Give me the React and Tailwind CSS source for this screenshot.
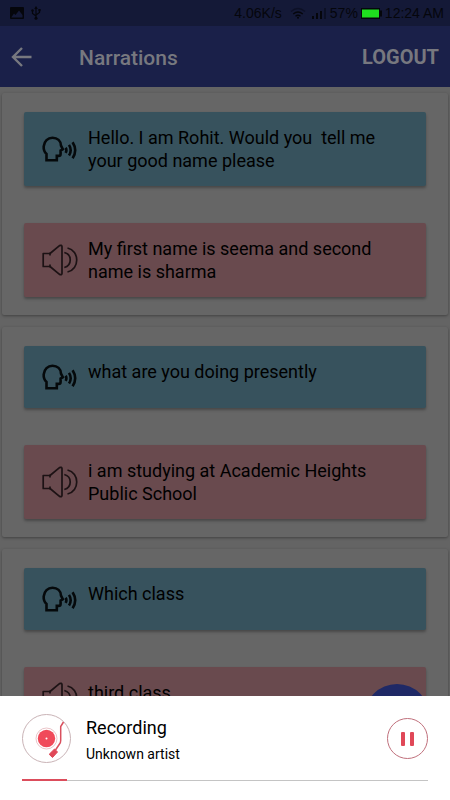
import clsx from 'clsx';

const CONVERSATIONS = [
  {
    id: 1,
    question: 'Hello. I am Rohit. Would you  tell me your good name please',
    answer: 'My first name is seema and second name is sharma',
  },
  {
    id: 2,
    question: 'what are you doing presently',
    answer: 'i am studying at Academic Heights Public School',
  },
  {
    id: 3,
    question: 'Which class',
    answer: 'third class',
  },
];

function SpeakingHeadIcon() {
  return (
    <svg viewBox="0 0 36 26" className="w-9 h-[26px]" fill="none" stroke="#05090b" strokeWidth="2.6">
      <path d="M4.500 24.300V18C2.200 15.800 1.500 13.200 1.700 10.300C2.200 5.200 5.800 1.700 10.500 1.700C15.500 1.700 18.800 5 19 9.600L20.800 13.300L18.600 14.500V18C18.600 19.400 18 19.900 16.600 19.900H14.800V24.300Z" />
      <path d="M23.600 11.700Q25.200 14.200 23.600 16.900M27 8.900Q30.400 14.200 27 19.500M30.600 6.200Q35.800 14.200 30.600 22.200" />
    </svg>
  );
}

function SpeakerIcon() {
  return (
    <svg viewBox="0 0 36 32" className="w-9 h-8" fill="none" stroke="#1c1214" strokeWidth="1.7" strokeLinejoin="round">
      <path d="M8 9.500H1.200V22.500H8M8 8.500V11.500M8 20.500V23.500" />
      <path d="M8 9.500L17.500 1.600Q19.800 0.700 20 2.500V29.500Q19.800 31.300 17.500 30.400L8 22.500" />
      <path d="M22.300 8.500C30.200 10.500 30.200 21.500 22.300 23.500M25.500 4C37.800 7 37.800 25 25.500 28" />
    </svg>
  );
}

function StatusBar() {
  return (
    <div className="flex items-center justify-between h-[26px] pl-[10px] pr-[6px] bg-[#141937] text-[#05060c]">
      <div className="flex items-center gap-[7px]">
        <svg viewBox="0 0 14 12" className="w-[14px] h-3">
          <rect width="14" height="12" rx="1" fill="#05060c" />
          <path d="M1.500 10L4 6.500L5.500 8L9 3.500L12.500 8V10.500H1.500Z" fill="#141937" />
        </svg>
        <svg viewBox="0 0 10 14" className="w-[10px] h-[14px]" fill="none" stroke="#05060c" strokeWidth="1.200">
          <path d="M5 2V12M5 10L1.500 7.500V4.500M5 9L8.500 6.500V4" />
          <path d="M5 0L6.800 3H3.200Z" fill="#05060c" stroke="none" />
          <circle cx="5" cy="12.300" r="1.500" fill="#05060c" stroke="none" />
          <circle cx="1.500" cy="4.500" r="1.200" fill="#05060c" stroke="none" />
          <rect x="7.400" y="3" width="2.200" height="2.200" fill="#05060c" stroke="none" />
        </svg>
      </div>
      <div className="flex items-center text-[14px] font-['Liberation_Sans',Arial,sans-serif]">
        <span>4.06K/s</span>
        <svg viewBox="0 0 16 12" className="w-4 h-3 ml-2" fill="none" strokeWidth="1.300">
          <path d="M1 4.500Q8 -1.500 15 4.500" stroke="#0d1026" />
          <path d="M3.200 7Q8 3 12.800 7M5.500 9.300Q8 7.200 10.500 9.300" stroke="#05060c" />
          <circle cx="8" cy="10.700" r="1" fill="#05060c" />
        </svg>
        <svg viewBox="0 0 15 12" className="w-[15px] h-3 ml-[6px]">
          <path d="M0 9h2v3H0zM4 6h2v6H4zM8 4h2v8H8z" fill="#05060c" />
          <path d="M12 1h2v11h-2z" fill="#0c1024" />
        </svg>
        <span className="ml-[3px]">57%</span>
        <svg viewBox="0 0 21 11" className="w-[21px] h-[11px] ml-[3px]">
          <path d="M0 0h19v2.500h2v6h-2V11H0z" fill="#05060c" />
          <rect x="1" y="1.500" width="17" height="8" fill="#1fe01f" />
        </svg>
        <span className="ml-[3px]">12:24 AM</span>
      </div>
    </div>
  );
}

function Header() {
  return (
    <header className="flex items-center h-[61px] shrink-0 px-[11px] bg-[#1a2049] text-[#77787f]">
      <button type="button" aria-label="Back">
        <svg viewBox="0 0 21 20" className="w-[21px] h-5" fill="none" stroke="currentColor" strokeWidth="2.400">
          <path d="M20.500 10H2.500M11 1L2 10L11 19" />
        </svg>
      </button>
      <h1 className="ml-[47px] pt-1 text-[21px] font-medium">Narrations</h1>
      <button type="button" className="ml-auto text-[20px] font-bold">
        LOGOUT
      </button>
    </header>
  );
}

function Bubble({ text, variant }) {
  const isQuestion = variant === 'question';

  return (
    <div
      className={clsx(
        'flex min-h-[62px] pl-[18px] pr-6 rounded-[2px] shadow-[0_2px_3px_rgba(0,0,0,0.3)]',
        isQuestion ? 'bg-[#37525d]' : 'bg-[#694a4e]'
      )}
    >
      <button type="button" aria-label={isQuestion ? 'Speak' : 'Listen'} className="shrink-0 self-center">
        {isQuestion ? <SpeakingHeadIcon /> : <SpeakerIcon />}
      </button>
      <p className="ml-[10px] py-[14px] text-[18px] leading-[23px] whitespace-pre-wrap">{text}</p>
    </div>
  );
}

function Conversation({ question, answer }) {
  return (
    <li className="flex flex-col gap-[37px] px-[22px] pt-[19px] pb-[18px] bg-[#666] rounded-[2px] shadow-[0_1px_3px_rgba(0,0,0,0.35)]">
      <Bubble text={question} variant="question" />
      <Bubble text={answer} variant="answer" />
    </li>
  );
}

function RecordingSheet() {
  return (
    <section className="fixed inset-x-0 bottom-0 px-[22px] pt-[18px] pb-[19px] bg-white">
      <div className="flex items-start">
        <svg viewBox="0 0 49 49" className="w-[49px] h-[49px]" fill="none">
          <circle cx="24.500" cy="24.500" r="24" stroke="#c9b3b6" />
          <circle cx="24.500" cy="24.500" r="10.500" stroke="#e3b5ba" strokeWidth="0.800" />
          <circle cx="24.500" cy="24.500" r="8.700" fill="#f04a5a" />
          <circle cx="24.500" cy="24.500" r="1" fill="#fff" />
          <path d="M41.500 8L38.700 12.500V26.500Q38.700 28.500 37.500 30L33.500 36" stroke="#d9505e" strokeWidth="1.500" />
          <path d="M32.500 35L35.500 38L30.500 43.500L27.200 40.300Z" fill="#e04858" stroke="#e04858" strokeLinejoin="round" />
        </svg>
        <div className="ml-[15px]">
          <h2 className="text-[18px] leading-[27px]">Recording</h2>
          <p className="text-[14px] leading-[26px]">Unknown artist</p>
        </div>
        <button
          type="button"
          aria-label="Pause recording"
          className="flex items-center justify-center gap-[5px] w-[41px] h-[41px] mt-1 ml-auto rounded-full border border-[#c0707c]"
        >
          <span className="w-1 h-[14px] rounded-[1px] bg-[#e04858]" />
          <span className="w-1 h-[14px] rounded-[1px] bg-[#e04858]" />
        </button>
      </div>
      <div className="flex items-center h-[2px] mt-3">
        <div className="w-[11%] h-[2px] bg-[#dc4d5c]" />
        <div className="grow h-px bg-[#c4c4c4]" />
      </div>
    </section>
  );
}

function App() {
  return (
    <div className="flex flex-col h-screen overflow-hidden bg-[#646464] text-black font-[Roboto,sans-serif]">
      <StatusBar />
      <Header />
      <main className="grow min-h-0 overflow-hidden px-[2px] pt-[6px]">
        <ul className="flex flex-col gap-3">
          {CONVERSATIONS.map((item) => (
            <Conversation key={item.id} question={item.question} answer={item.answer} />
          ))}
        </ul>
      </main>
      <button
        type="button"
        aria-label="Start recording"
        className="fixed right-5 bottom-[50px] w-[66px] h-[66px] rounded-full bg-[#1f2966]"
      />
      <RecordingSheet />
    </div>
  );
}

export default App;
